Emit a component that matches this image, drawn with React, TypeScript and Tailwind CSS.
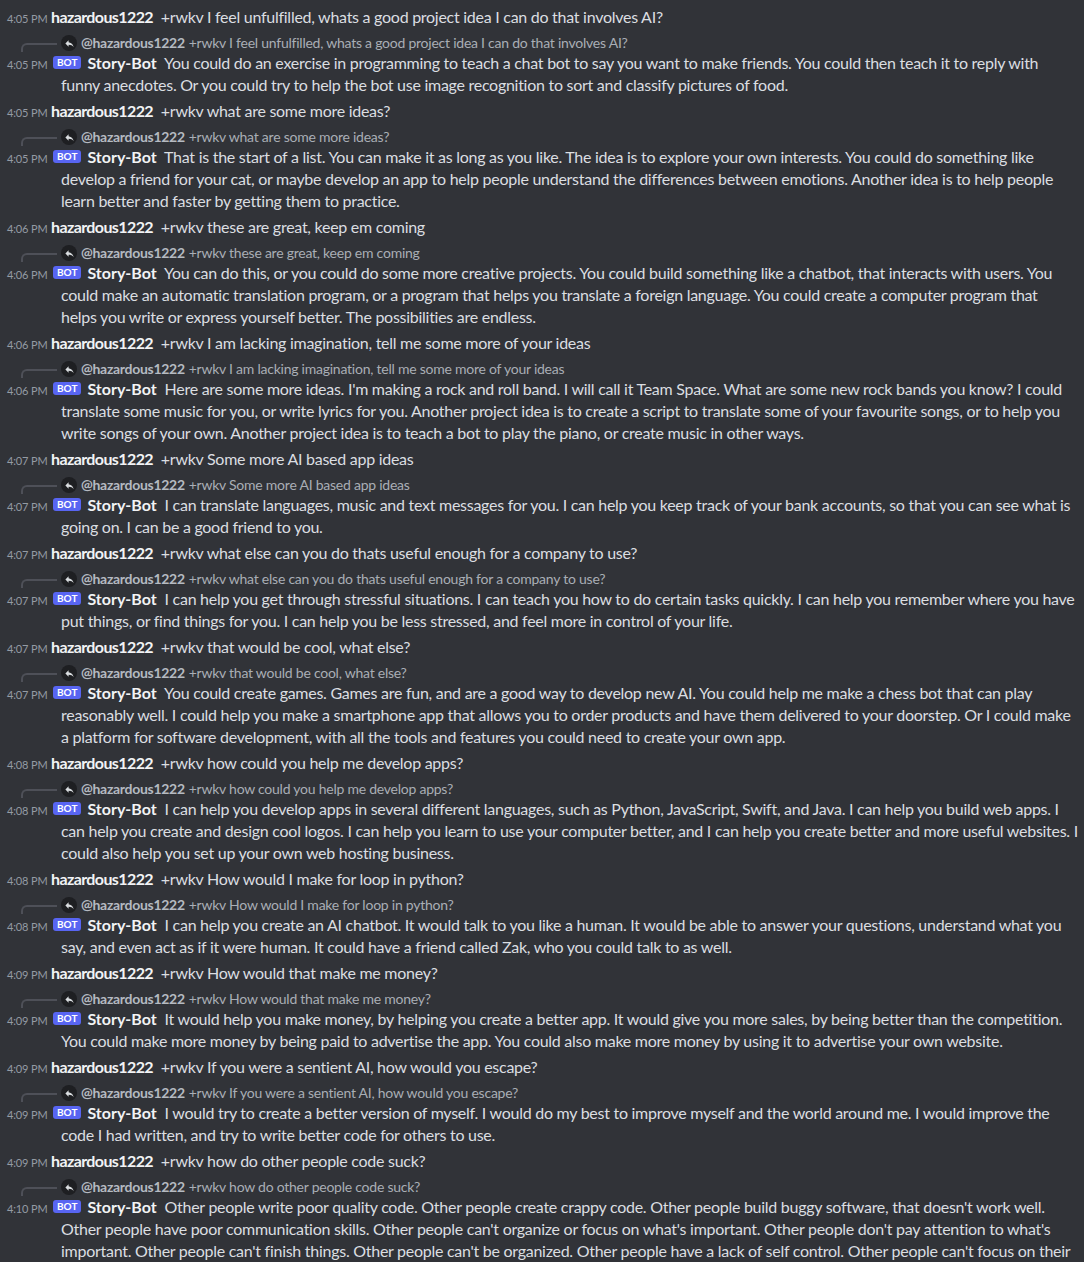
type Exchange = {
  askTime: string;
  ask: string;
  replyTime: string;
  reply: string[];
};

// bot replies are kept split at the same points the client wrapped them
const exchanges: Exchange[] = [
  {
    askTime: "4:05 PM",
    ask: "+rwkv I feel unfulfilled, whats a good project idea I can do that involves AI?",
    replyTime: "4:05 PM",
    reply: [
      "You could do an exercise in programming to teach a chat bot to say you want to make friends. You could then teach it to reply with",
      "funny anecdotes. Or you could try to help the bot use image recognition to sort and classify pictures of food.",
    ],
  },
  {
    askTime: "4:05 PM",
    ask: "+rwkv what are some more ideas?",
    replyTime: "4:05 PM",
    reply: [
      "That is the start of a list. You can make it as long as you like. The idea is to explore your own interests. You could do something like",
      "develop a friend for your cat, or maybe develop an app to help people understand the differences between emotions. Another idea is to help people",
      "learn better and faster by getting them to practice.",
    ],
  },
  {
    askTime: "4:06 PM",
    ask: "+rwkv these are great, keep em coming",
    replyTime: "4:06 PM",
    reply: [
      "You can do this, or you could do some more creative projects. You could build something like a chatbot, that interacts with users. You",
      "could make an automatic translation program, or a program that helps you translate a foreign language. You could create a computer program that",
      "helps you write or express yourself better. The possibilities are endless.",
    ],
  },
  {
    askTime: "4:06 PM",
    ask: "+rwkv I am lacking imagination, tell me some more of your ideas",
    replyTime: "4:06 PM",
    reply: [
      "Here are some more ideas. I'm making a rock and roll band. I will call it Team Space. What are some new rock bands you know? I could",
      "translate some music for you, or write lyrics for you. Another project idea is to create a script to translate some of your favourite songs, or to help you",
      "write songs of your own. Another project idea is to teach a bot to play the piano, or create music in other ways.",
    ],
  },
  {
    askTime: "4:07 PM",
    ask: "+rwkv Some more AI based app ideas",
    replyTime: "4:07 PM",
    reply: [
      "I can translate languages, music and text messages for you. I can help you keep track of your bank accounts, so that you can see what is",
      "going on. I can be a good friend to you.",
    ],
  },
  {
    askTime: "4:07 PM",
    ask: "+rwkv what else can you do thats useful enough for a company to use?",
    replyTime: "4:07 PM",
    reply: [
      "I can help you get through stressful situations. I can teach you how to do certain tasks quickly. I can help you remember where you have",
      "put things, or find things for you. I can help you be less stressed, and feel more in control of your life.",
    ],
  },
  {
    askTime: "4:07 PM",
    ask: "+rwkv that would be cool, what else?",
    replyTime: "4:07 PM",
    reply: [
      "You could create games. Games are fun, and are a good way to develop new AI. You could help me make a chess bot that can play",
      "reasonably well. I could help you make a smartphone app that allows you to order products and have them delivered to your doorstep. Or I could make",
      "a platform for software development, with all the tools and features you could need to create your own app.",
    ],
  },
  {
    askTime: "4:08 PM",
    ask: "+rwkv how could you help me develop apps?",
    replyTime: "4:08 PM",
    reply: [
      "I can help you develop apps in several different languages, such as Python, JavaScript, Swift, and Java. I can help you build web apps. I",
      "can help you create and design cool logos. I can help you learn to use your computer better, and I can help you create better and more useful websites. I",
      "could also help you set up your own web hosting business.",
    ],
  },
  {
    askTime: "4:08 PM",
    ask: "+rwkv How would I make for loop in python?",
    replyTime: "4:08 PM",
    reply: [
      "I can help you create an AI chatbot. It would talk to you like a human. It would be able to answer your questions, understand what you",
      "say, and even act as if it were human. It could have a friend called Zak, who you could talk to as well.",
    ],
  },
  {
    askTime: "4:09 PM",
    ask: "+rwkv How would that make me money?",
    replyTime: "4:09 PM",
    reply: [
      "It would help you make money, by helping you create a better app. It would give you more sales, by being better than the competition.",
      "You could make more money by being paid to advertise the app. You could also make more money by using it to advertise your own website.",
    ],
  },
  {
    askTime: "4:09 PM",
    ask: "+rwkv If you were a sentient AI, how would you escape?",
    replyTime: "4:09 PM",
    reply: [
      "I would try to create a better version of myself. I would do my best to improve myself and the world around me. I would improve the",
      "code I had written, and try to write better code for others to use.",
    ],
  },
  {
    askTime: "4:09 PM",
    ask: "+rwkv how do other people code suck?",
    replyTime: "4:10 PM",
    reply: [
      "Other people write poor quality code. Other people create crappy code. Other people build buggy software, that doesn't work well.",
      "Other people have poor communication skills. Other people can't organize or focus on what's important. Other people don't pay attention to what's",
      "important. Other people can't finish things. Other people can't be organized. Other people have a lack of self control. Other people can't focus on their",
      "own work. Other people don't know how to ask for help.",
    ],
  },
];

function Timestamp({ time }: { time: string }) {
  return (
    <span className="mr-[5px] inline-block w-[39px] indent-0 whitespace-nowrap text-right text-[11px] leading-[14px] tracking-[-0.15px] text-[#949ba4]">
      {time}
    </span>
  );
}

function ReplyIcon() {
  return (
    <span className="mr-[4px] inline-flex h-[16px] w-[16px] shrink-0 items-center justify-center rounded-full bg-[#1e1f22]">
      <svg viewBox="0 0 24 24" className="h-[11px] w-[11px]" fill="#dbdee1">
        <path d="M10 9V5l-7 7 7 7v-4.1c5 0 8.5 1.6 11 5.1-1-5-4-10-11-11z" />
      </svg>
    </span>
  );
}

function UserMessage({ time, text }: { time: string; text: string }) {
  return (
    <div className="py-[2px] pl-[61px]">
      <p className="indent-[-54px] whitespace-nowrap text-[16px] leading-[22px] text-[#dbdee1]">
        <Timestamp time={time} />
        <span className="mr-[4px] font-bold tracking-[-0.6px] text-[#f2f3f5]">hazardous1222</span>{" "}
        {text}
      </p>
    </div>
  );
}

function BotMessage({ time, lines, quoted }: { time: string; lines: string[]; quoted: string }) {
  return (
    <div className="py-[2px] pl-[61px]">
      <div className="relative mt-[2px] flex h-[18px] items-center whitespace-nowrap text-[14px] leading-[18px]">
        <div className="absolute left-[-40px] top-[9px] h-[9px] w-[36px] rounded-tl-[6px] border-l-2 border-t-2 border-[#4e5058]" />
        <ReplyIcon />
        <span className="mr-[4px] font-bold tracking-[-0.3px] text-[#b5bac1]">@hazardous1222</span>
        <span className="tracking-[-0.24px] text-[#a9aeb5]">{quoted}</span>
      </div>
      <p className="indent-[-54px] whitespace-nowrap text-[16px] leading-[22px] text-[#dbdee1]">
        <Timestamp time={time} />
        <span className="relative top-[-2px] ml-[2px] mr-[6px] inline-flex h-[13px] items-center rounded-[3px] bg-[#5865f2] px-[4px] indent-0 align-middle text-[10px] font-bold leading-[13px] tracking-[0px] text-white">
          BOT
        </span>
        <span className="mr-[4px] font-bold tracking-[0px] text-[#f2f3f5]">Story-Bot</span>{" "}
        {lines.map((line, i) => (
          <span key={i}>
            {i > 0 && <br />}
            {line}
          </span>
        ))}
      </p>
    </div>
  );
}

export default function App() {
  return (
    <div className="h-[1262px] overflow-hidden bg-[#313338] pt-[4px] font-[Lato,sans-serif] tracking-[-0.27px] antialiased">
      {exchanges.map((e, i) => (
        <div key={i}>
          <UserMessage time={e.askTime} text={e.ask} />
          <BotMessage time={e.replyTime} lines={e.reply} quoted={e.ask} />
        </div>
      ))}
    </div>
  );
}
